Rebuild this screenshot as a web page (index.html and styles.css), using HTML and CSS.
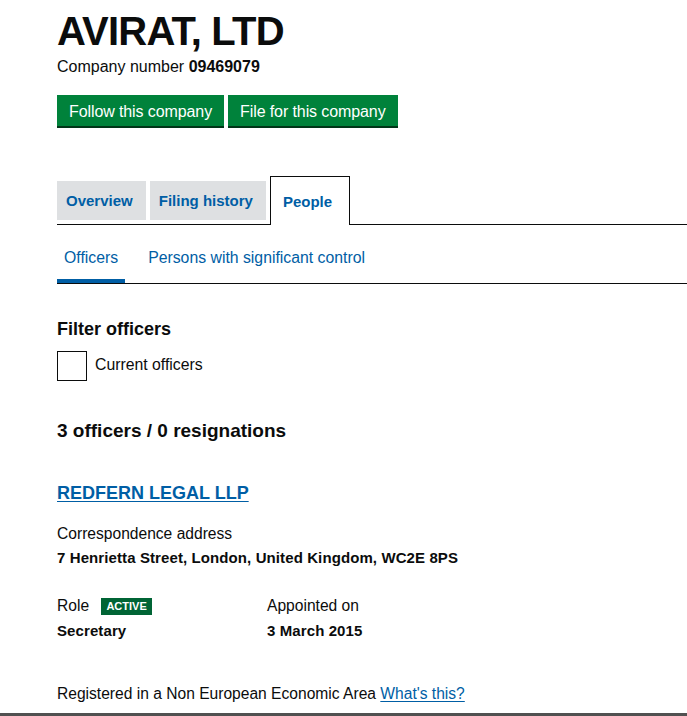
FILE: index.html
```html
<!DOCTYPE html>
<html lang="en">
<head>
<meta charset="utf-8">
<title>AVIRAT, LTD - People</title>
<link rel="stylesheet" href="styles.css">
</head>
<body>
<main class="page">
  <header class="company-header">
    <h1 class="company-name">AVIRAT, LTD</h1>
    <p class="company-number">Company number <strong>09469079</strong></p>
    <div class="actions">
      <a class="button" href="#">Follow this company</a>
      <a class="button" href="#">File for this company</a>
    </div>
  </header>

  <nav class="tabs">
    <a class="tab" href="#">Overview</a>
    <a class="tab" href="#">Filing history</a>
    <a class="tab tab-active" href="#">People</a>
  </nav>

  <nav class="subtabs">
    <a class="subtab subtab-active" href="#">Officers</a>
    <a class="subtab" href="#">Persons with significant control</a>
  </nav>

  <section class="filter">
    <h2 class="filter-title">Filter officers</h2>
    <label class="checkbox-row">
      <span class="checkbox"></span>
      <span class="checkbox-label">Current officers</span>
    </label>
  </section>

  <h2 class="count">3 officers / 0 resignations</h2>

  <section class="officer">
    <h3 class="officer-name"><a href="#">REDFERN LEGAL LLP</a></h3>
    <p class="label">Correspondence address</p>
    <p class="value">7 Henrietta Street, London, United Kingdom, WC2E 8PS</p>
    <div class="details">
      <div class="detail">
        <p class="label">Role <span class="tag">Active</span></p>
        <p class="value">Secretary</p>
      </div>
      <div class="detail">
        <p class="label">Appointed on</p>
        <p class="value">3 March 2015</p>
      </div>
    </div>
    <p class="label note">Registered in a Non European Economic Area <a href="#">What's this?</a></p>
  </section>
</main>
<div class="footer-rule"></div>
</body>
</html>
```
FILE: styles.css
```css
* { box-sizing: border-box; }

html, body {
  margin: 0;
  padding: 0;
  background: #fff;
}

body {
  font-family: "Liberation Sans", Arial, sans-serif;
  color: #0b0c0c;
  font-size: 16px;
  line-height: 20px;
  overflow: hidden;
}

a { color: #005ea5; }

p { margin: 0; }

.page {
  padding-left: 57px;
}

.company-name {
  margin: 0;
  padding-top: 11px;
  font-size: 40px;
  line-height: 40px;
  font-weight: 700;
  letter-spacing: -0.8px;
}

.company-number {
  margin-top: 6px;
  font-size: 16px;
}

.actions {
  display: flex;
  gap: 4px;
  margin-top: 18px;
}

.button {
  display: block;
  height: 31px;
  padding: 0 12px;
  line-height: 33px;
  background: #00823b;
  color: #fff;
  text-decoration: none;
  font-size: 16px;
  letter-spacing: -0.1px;
  box-shadow: 0 2px 0 #003618;
}

.tabs {
  display: flex;
  align-items: flex-end;
  gap: 4px;
  margin-top: 50px;
  border-bottom: 1px solid #0b0c0c;
}

.tab {
  display: block;
  height: 39px;
  margin-bottom: 4px;
  padding: 0 13px 0 9px;
  line-height: 40px;
  background: #dee0e2;
  font-size: 15px;
  font-weight: 700;
  text-decoration: none;
  color: #005ea5;
}

.tab-active {
  height: 49px;
  margin-bottom: -1px;
  padding: 0 17px 0 12px;
  line-height: 49px;
  background: #fff;
  border: 1px solid #0b0c0c;
  border-bottom: 0;
}

.subtabs {
  display: flex;
  gap: 16px;
  margin-top: 10px;
  border-bottom: 1px solid #0b0c0c;
}

.subtab {
  display: block;
  padding: 13px 7px 11px;
  border-bottom: 4px solid transparent;
  font-size: 15.8px;
  text-decoration: none;
  color: #005ea5;
}

.subtab-active {
  border-bottom-color: #005ea5;
}

.filter-title {
  margin: 33px 0 0;
  font-size: 18px;
  line-height: 24px;
  font-weight: 700;
}

.checkbox-row {
  display: flex;
  align-items: center;
  gap: 8px;
  margin-top: 10px;
}

.checkbox {
  display: block;
  width: 30px;
  height: 30px;
  border: 1px solid #0b0c0c;
}

.checkbox-label {
  font-size: 15.8px;
  margin-top: -3px;
}

.count {
  margin: 38px 0 0;
  font-size: 19px;
  line-height: 24px;
  font-weight: 700;
}

.officer-name {
  margin: 38px 0 0;
  font-size: 18px;
  line-height: 24px;
  font-weight: 700;
}

.officer-name a {
  text-underline-offset: 2px;
}

.officer .label {
  margin-top: 19px;
  font-size: 15.6px;
}

.officer .value {
  margin-top: 4px;
  font-size: 15px;
  font-weight: 700;
  letter-spacing: 0.1px;
}

.details {
  display: grid;
  grid-template-columns: 210px 210px;
  margin-top: 9px;
}

.details .label { margin-top: 19px; }
.details .value { margin-top: 5px; }

.tag {
  display: inline-block;
  margin-left: 8px;
  padding: 0 5px;
  height: 17px;
  line-height: 17px;
  vertical-align: 1px;
  background: #006435;
  color: #fff;
  font-size: 11px;
  font-weight: 700;
  text-transform: uppercase;
}

.officer .note {
  margin-top: 43px;
}

.note a {
  text-underline-offset: 2px;
}

.footer-rule {
  height: 3px;
  margin-top: 9px;
  background: #505050;
}
```
